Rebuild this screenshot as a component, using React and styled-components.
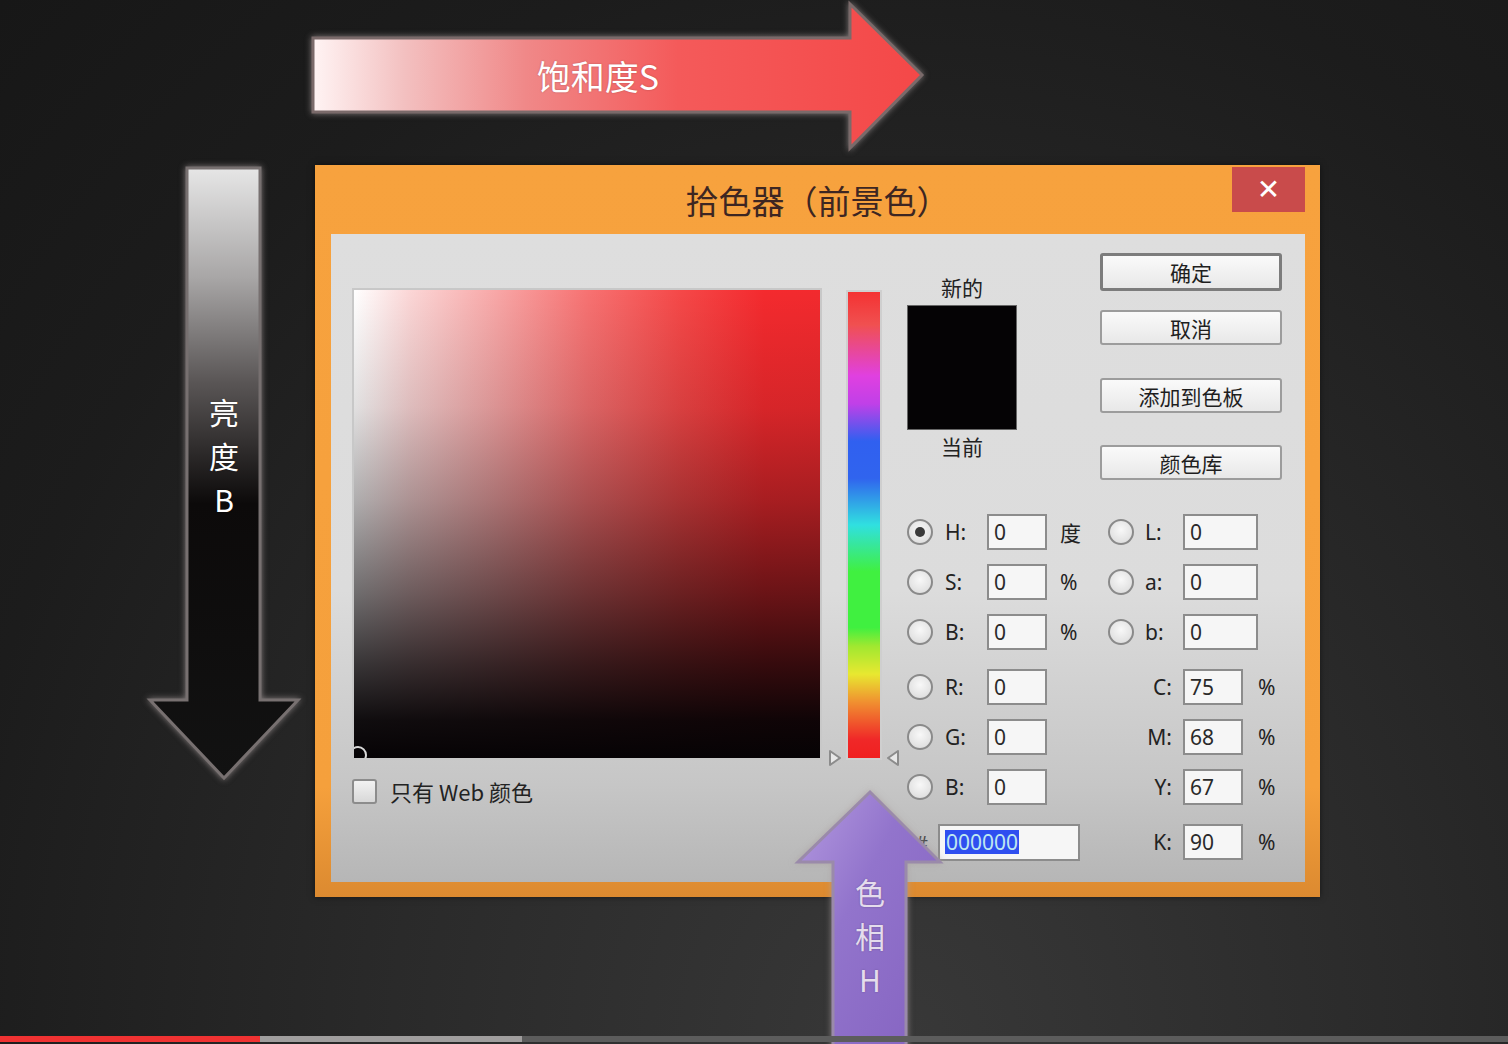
import React from 'react'
import styled, { createGlobalStyle } from 'styled-components'

const GlobalStyle = createGlobalStyle`
  html, body {
    margin: 0;
    padding: 0;
  }
  body {
    width: 1508px;
    height: 1044px;
    overflow: hidden;
    background: #222;
    font-family: "Noto Sans CJK SC", "Noto Sans", sans-serif;
  }
`

const Stage = styled.div`
  position: relative;
  width: 1508px;
  height: 1044px;
  overflow: hidden;
  box-sizing: border-box;
  padding: 165px 0 0 315px;
  background: radial-gradient(ellipse at 60% 100%, #383838 0%, #2a2a2a 40%, #1c1c1c 75%, #171717 100%);
`

const Progress = styled.div`
  position: absolute;
  left: 0;
  right: 0;
  bottom: 2px;
  height: 6px;
  display: flex;
  background: #5c5c5c;
`

const ProgressPart = styled.div`
  width: ${(p) => p.$w}px;
  background: ${(p) => p.$c};
`

/* ---------- dialog ---------- */

const Dialog = styled.div`
  width: 1005px;
  height: 732px;
  display: flex;
  flex-direction: column;
  background: linear-gradient(to bottom, #f7a23e 0%, #f5a03c 85%, #dc8a30 100%);
  box-shadow: 0 0 6px rgba(0, 0, 0, 0.5);
`

const TitleBar = styled.div`
  height: 69px;
  display: grid;
  grid-template-columns: 1fr auto 1fr;
  align-items: center;
`

const Title = styled.div`
  grid-column: 2;
  font-size: 33px;
  color: #3d2622;
`

const Close = styled.div`
  grid-column: 3;
  justify-self: end;
  align-self: start;
  margin: 2px 15px 0 0;
  width: 73px;
  height: 45px;
  background: #c94b4b;
  color: #fff;
  font-family: "DejaVu Sans", sans-serif;
  font-size: 28px;
  font-weight: bold;
  display: flex;
  align-items: center;
  justify-content: center;
`

const Panel = styled.div`
  flex: 1;
  margin: 0 15px 15px 16px;
  display: flex;
  align-items: flex-start;
  padding: 19px 0 0 21px;
  background: linear-gradient(to bottom, #dedede 0%, #dcdcdc 55%, #c6c6c6 85%, #b6b6b6 100%);
`

const LeftCol = styled.div`
  margin-top: 35px;
  width: 470px;
  display: flex;
  flex-direction: column;
`

const Field = styled.div`
  position: relative;
  width: 470px;
  height: 472px;
  box-sizing: border-box;
  border: 2px solid #c8c8c8;
  overflow: hidden;
  background:
    linear-gradient(
      to bottom,
      rgba(6, 3, 5, 0) 0%,
      rgba(6, 3, 5, 0.12) 25%,
      rgba(6, 3, 5, 0.32) 45%,
      rgba(6, 3, 5, 0.58) 65%,
      rgba(6, 3, 5, 0.8) 80%,
      rgba(6, 3, 5, 0.96) 92%,
      #060305 100%
    ),
    linear-gradient(
      to right,
      #ffffff 0%,
      #fbd6d6 12%,
      #f8a8a8 30%,
      #f77272 50%,
      #f54848 70%,
      #f42a2e 88%,
      #f22a2e 100%
    );
`

const Marker = styled.div`
  position: absolute;
  left: -5px;
  bottom: -6px;
  width: 14px;
  height: 14px;
  border-radius: 50%;
  border: 2px solid #d8d8d8;
`

const CheckRow = styled.div`
  margin-top: 15px;
  display: flex;
  align-items: center;
  gap: 13px;
  font-size: 22px;
  color: #222;
`

const CheckBox = styled.div`
  width: 21px;
  height: 21px;
  border: 2px solid #8c8c8c;
  border-radius: 3px;
  background: linear-gradient(#f2f2f2, #d8d8d8);
`

const HueCol = styled.div`
  position: relative;
  margin: 37px 0 0 24px;
  width: 36px;
  height: 470px;
  box-sizing: border-box;
  border: 2px solid #cfcfcf;
  background: linear-gradient(
    to bottom,
    #f43232 0%,
    #f05050 7%,
    #e040e0 18%,
    #c040e8 24%,
    #3060f0 32%,
    #3064ee 40%,
    #30e0e0 50%,
    #40f040 60%,
    #40f040 72%,
    #a0e830 76%,
    #e8e830 82%,
    #f09030 88%,
    #f02828 96%,
    #f02020 100%
  );
`

const Pointer = styled.svg`
  position: absolute;
  bottom: -9px;
  ${(p) => (p.$side === 'left' ? 'left: -20px;' : 'right: -20px;')}
`

/* ---------- right side ---------- */

const RightCol = styled.div`
  margin-left: 25px;
  width: 375px;
  display: flex;
  flex-direction: column;
`

const TopArea = styled.div`
  display: flex;
  justify-content: space-between;
  height: 261px;
`

const SwatchBlock = styled.div`
  width: 110px;
  display: flex;
  flex-direction: column;
  align-items: center;
  padding-top: 21px;
  font-size: 21px;
  color: #222;
`

const SwatchLabel = styled.div`
  line-height: 26px;
`

const Swatch = styled.div`
  width: 110px;
  height: 125px;
  margin: 5px 0 3px;
  box-sizing: border-box;
  border: 1px solid #666;
  background: #050305;
`

const ButtonCol = styled.div`
  width: 182px;
  display: flex;
  flex-direction: column;
`

const Button = styled.div`
  height: ${(p) => (p.$primary ? 38 : 35)}px;
  margin-top: ${(p) => p.$space || 0}px;
  box-sizing: border-box;
  border: ${(p) => (p.$primary ? '3px solid #7c7c7c' : '2px solid #9c9c9c')};
  border-radius: 3px;
  background: linear-gradient(#fafafa, #e8e8e8);
  display: flex;
  align-items: center;
  justify-content: center;
  font-size: 21px;
  color: #1e1e1e;
`

const Rows = styled.div`
  display: flex;
  flex-direction: column;
`

const Row = styled.div`
  display: flex;
  align-items: center;
  height: 36px;
  margin-top: ${(p) => p.$space}px;
`

const Group = styled.div`
  display: flex;
  align-items: center;
  width: ${(p) => p.$w || 'auto'};
`

const Radio = styled.div`
  position: relative;
  width: 26px;
  height: 26px;
  box-sizing: border-box;
  border-radius: 50%;
  border: 2px solid #8a8a8a;
  background: radial-gradient(circle at 50% 40%, #f8f8f8, #d8d8d8);
  margin-right: ${(p) => p.$mr}px;

  &::after {
    content: '';
    display: ${(p) => (p.$on ? 'block' : 'none')};
    position: absolute;
    left: 6px;
    top: 6px;
    width: 10px;
    height: 10px;
    border-radius: 50%;
    background: #3a3a3a;
  }
`

const Label = styled.div`
  width: ${(p) => p.$w}px;
  box-sizing: border-box;
  text-align: ${(p) => (p.$right ? 'right' : 'left')};
  padding-right: ${(p) => (p.$right ? 11 : 0)}px;
  font-family: "Noto Sans", "Noto Sans CJK SC", sans-serif;
  font-size: 21px;
  color: #222;
`

const Input = styled.div`
  width: ${(p) => p.$w}px;
  height: ${(p) => p.$h || 36}px;
  box-sizing: border-box;
  border: 2px solid #8c8c8c;
  background: #f6f6f6;
  display: flex;
  align-items: center;
  padding-left: 5px;
  font-family: "Noto Sans", sans-serif;
  font-size: 21px;
  color: #2a2a2a;
`

const Unit = styled.div`
  margin-left: ${(p) => p.$ml}px;
  font-family: "Noto Sans", "Noto Sans CJK SC", sans-serif;
  font-size: 21px;
  color: #222;
`

const Hash = styled.div`
  width: 31px;
  padding-left: 8px;
  box-sizing: border-box;
  font-family: "Noto Sans", sans-serif;
  font-size: 20px;
  color: #444;
`

const Selected = styled.span`
  background: #2f4ff0;
  color: #bfe8f0;
  line-height: 24px;
  padding: 0 1px;
`

/* ---------- annotation arrows ---------- */

const ArrowBox = styled.div`
  position: absolute;
  left: ${(p) => p.$x}px;
  top: ${(p) => p.$y}px;
  width: ${(p) => p.$w}px;
  height: ${(p) => p.$h}px;
`

const ArrowSvg = styled.svg`
  position: absolute;
  inset: 0;
  overflow: visible;
  filter: drop-shadow(0 0 3px rgba(170, 160, 160, 0.7));
`

const ArrowText = styled.div`
  position: absolute;
  left: ${(p) => p.$x}px;
  top: ${(p) => p.$y}px;
  transform: translateX(-50%);
  display: flex;
  flex-direction: ${(p) => (p.$vertical ? 'column' : 'row')};
  align-items: center;
  font-family: "Noto Sans CJK SC", "Noto Sans", sans-serif;
  font-size: ${(p) => (p.$vertical ? 30 : 34)}px;
  line-height: ${(p) => (p.$vertical ? '44px' : '40px')};
  color: ${(p) => p.$c || '#fff'};
  white-space: nowrap;
  text-shadow: 0 0 2px rgba(0, 0, 0, 0.25);
`

const VChar = styled.span`
  display: block;
  height: 44px;
`

function SaturationArrow() {
  return (
    <ArrowBox $x={300} $y={0} $w={640} $h={156}>
      <ArrowSvg width="640" height="156" viewBox="0 0 640 156">
        <defs>
          <linearGradient id="satG" x1="13" y1="0" x2="622" y2="0" gradientUnits="userSpaceOnUse">
            <stop offset="0" stopColor="#fff4f4" />
            <stop offset="0.15" stopColor="#f3c0c0" />
            <stop offset="0.35" stopColor="#f08888" />
            <stop offset="0.6" stopColor="#f45a5a" />
            <stop offset="1" stopColor="#f44848" />
          </linearGradient>
        </defs>
        <path
          d="M13 38 H550 V4 L622 75 L550 148 V112 H13 Z"
          fill="url(#satG)"
          stroke="#7a6a6a"
          strokeWidth="3"
        />
      </ArrowSvg>
      <ArrowText $x={298} $y={56}>饱和度S</ArrowText>
    </ArrowBox>
  )
}

function BrightnessArrow() {
  return (
    <ArrowBox $x={140} $y={160} $w={170} $h={630}>
      <ArrowSvg width="170" height="630" viewBox="0 0 170 630">
        <defs>
          <linearGradient id="briG" x1="0" y1="8" x2="0" y2="618" gradientUnits="userSpaceOnUse">
            <stop offset="0" stopColor="#e6e6e6" />
            <stop offset="0.18" stopColor="#a8a6a6" />
            <stop offset="0.35" stopColor="#5a5656" />
            <stop offset="0.55" stopColor="#0c0a0a" />
            <stop offset="1" stopColor="#121212" />
          </linearGradient>
        </defs>
        <path
          d="M47 8 H120 V540 H158 L84 618 L10 540 H47 Z"
          fill="url(#briG)"
          stroke="#777070"
          strokeWidth="3"
        />
      </ArrowSvg>
      <ArrowText $x={84} $y={229} $vertical>
        <VChar>亮</VChar>
        <VChar>度</VChar>
        <VChar>B</VChar>
      </ArrowText>
    </ArrowBox>
  )
}

function HueArrow() {
  return (
    <ArrowBox $x={790} $y={785} $w={160} $h={259}>
      <ArrowSvg width="160" height="259" viewBox="0 0 160 259">
        <defs>
          <linearGradient id="hueG" x1="0" y1="0" x2="1" y2="1">
            <stop offset="0" stopColor="#b49ae0" />
            <stop offset="0.4" stopColor="#9274cc" />
            <stop offset="1" stopColor="#8462c0" />
          </linearGradient>
        </defs>
        <path
          d="M80 7 L150 77 H116 V270 H43 V77 H8 Z"
          fill="url(#hueG)"
          stroke="#9a8aaa"
          strokeWidth="3"
        />
      </ArrowSvg>
      <ArrowText $x={80} $y={84} $vertical $c="#e4dcec">
        <VChar>色</VChar>
        <VChar>相</VChar>
        <VChar>H</VChar>
      </ArrowText>
    </ArrowBox>
  )
}

/* ---------- fields ---------- */

const hsb = [
  { k: 'H:', v: '0', u: '度', on: true, r: 'L:', rv: '0', space: 0 },
  { k: 'S:', v: '0', u: '%', r: 'a:', rv: '0', space: 14 },
  { k: 'B:', v: '0', u: '%', r: 'b:', rv: '0', space: 14 },
]

const rgb = [
  { k: 'R:', v: '0', c: 'C:', cv: '75', space: 19 },
  { k: 'G:', v: '0', c: 'M:', cv: '68', space: 14 },
  { k: 'B:', v: '0', c: 'Y:', cv: '67', space: 14 },
]

function PointerIcon({ side }) {
  const d = side === 'left' ? 'M2 2 L12 9 L2 16 Z' : 'M12 2 L2 9 L12 16 Z'
  return (
    <Pointer $side={side} width="14" height="18" viewBox="0 0 14 18">
      <path d={d} fill="#e8e8e8" stroke="#8c8c8c" strokeWidth="2" strokeLinejoin="round" />
    </Pointer>
  )
}

export default function App() {
  return (
    <>
      <GlobalStyle />
      <Stage>
        <Dialog>
          <TitleBar>
            <Title>拾色器（前景色）</Title>
            <Close>✕</Close>
          </TitleBar>
          <Panel>
            <LeftCol>
              <Field>
                <Marker />
              </Field>
              <CheckRow>
                <CheckBox />
                <span>只有 Web 颜色</span>
              </CheckRow>
            </LeftCol>

            <HueCol>
              <PointerIcon side="left" />
              <PointerIcon side="right" />
            </HueCol>

            <RightCol>
              <TopArea>
                <SwatchBlock>
                  <SwatchLabel>新的</SwatchLabel>
                  <Swatch />
                  <SwatchLabel>当前</SwatchLabel>
                </SwatchBlock>
                <ButtonCol>
                  <Button $primary>确定</Button>
                  <Button $space={19}>取消</Button>
                  <Button $space={33}>添加到色板</Button>
                  <Button $space={32}>颜色库</Button>
                </ButtonCol>
              </TopArea>

              <Rows>
                {hsb.map((row) => (
                  <Row key={row.k + row.r} $space={row.space}>
                    <Group $w="201px">
                      <Radio $mr={12} $on={row.on} />
                      <Label $w={42}>{row.k}</Label>
                      <Input $w={60}>{row.v}</Input>
                      <Unit $ml={13}>{row.u}</Unit>
                    </Group>
                    <Group>
                      <Radio $mr={11} />
                      <Label $w={38}>{row.r}</Label>
                      <Input $w={75}>{row.rv}</Input>
                    </Group>
                  </Row>
                ))}
                {rgb.map((row) => (
                  <Row key={row.k + row.c} $space={row.space}>
                    <Group $w="201px">
                      <Radio $mr={12} />
                      <Label $w={42}>{row.k}</Label>
                      <Input $w={60}>{row.v}</Input>
                    </Group>
                    <Group>
                      <Label $w={75} $right>{row.c}</Label>
                      <Input $w={60}>{row.cv}</Input>
                      <Unit $ml={15}>%</Unit>
                    </Group>
                  </Row>
                ))}
                <Row $space={19}>
                  <Group $w="201px">
                    <Hash>#</Hash>
                    <Input $w={142} $h={37}>
                      <Selected>000000</Selected>
                    </Input>
                  </Group>
                  <Group>
                    <Label $w={75} $right>K:</Label>
                    <Input $w={60}>90</Input>
                    <Unit $ml={15}>%</Unit>
                  </Group>
                </Row>
              </Rows>
            </RightCol>
          </Panel>
        </Dialog>

        <SaturationArrow />
        <BrightnessArrow />
        <HueArrow />

        <Progress>
          <ProgressPart $w={260} $c="#f03232" />
          <ProgressPart $w={262} $c="#a09e9e" />
        </Progress>
      </Stage>
    </>
  )
}
